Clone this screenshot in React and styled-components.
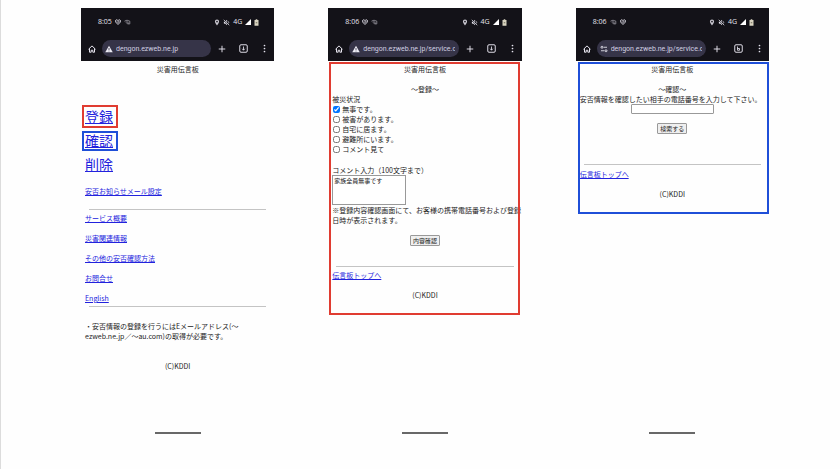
import React, { useState } from 'react';
import styled, { createGlobalStyle } from 'styled-components';

const GlobalStyle = createGlobalStyle`
  * {
    box-sizing: border-box;
  }
  body {
    margin: 0;
    background: #fefefe;
    color: #222;
    font-family: 'Noto Sans CJK JP', 'Noto Sans', sans-serif;
    font-size: 7px;
    line-height: 10px;
  }
`;

const Board = styled.main`
  min-height: 100vh;
  display: grid;
  grid-template-columns: repeat(3, minmax(0, 1fr));
  column-gap: 54px;
  padding: 8px 71px 35px 80px;
  border-left: 1px solid #dcdcdc;
`;

const Phone = styled.section`
  display: flex;
  flex-direction: column;
`;

const Chrome = styled.header`
  background: #131218;
  color: #e6e4ee;
  padding: 9px 8px 4px 7px;
`;

const StatusBar = styled.div`
  display: flex;
  align-items: center;
  gap: 3px;
  height: 10px;
  padding: 0 7px 0 10px;
  margin-bottom: 13px;
  font-family: 'Open Sans', Roboto, sans-serif;
  font-size: 7px;
`;

const StatusRight = styled.div`
  display: flex;
  align-items: center;
  gap: 3px;
  margin-left: auto;
`;

const Toolbar = styled.div`
  display: flex;
  align-items: center;
`;

const IconButton = styled.button`
  display: flex;
  border: 0;
  padding: 0;
  margin-left: ${({ $gap }) => $gap || 0}px;
  background: none;
  color: inherit;
`;

const AddressPill = styled.label`
  flex: 1;
  min-width: 0;
  display: flex;
  align-items: center;
  gap: 3px;
  height: 17px;
  margin-left: 6px;
  padding: 0 4px 0 3px;
  border-radius: 9px;
  background: #363448;
`;

const AddressInput = styled.input`
  flex: 1;
  min-width: 0;
  border: 0;
  padding: 0;
  outline: none;
  background: none;
  color: #d2d0e2;
  font-family: Roboto, 'Open Sans', sans-serif;
  font-size: 7px;
  line-height: 12px;
`;

const Page = styled.div`
  position: relative;
  padding: 3px 4px 15px;
`;

/* coloured marker line laid over the page */
const Frame = styled.div`
  position: absolute;
  top: 1px;
  bottom: 0;
  left: ${({ $left }) => $left}px;
  right: ${({ $right }) => $right}px;
  border: 2px solid ${({ $color }) => $color};
  pointer-events: none;
`;

const Title = styled.h1`
  margin: 0 0 10px;
  font-size: 7px;
  font-weight: 400;
  text-align: center;
`;

const Heading = styled.h2`
  margin: 0;
  font-size: 7px;
  font-weight: 400;
  text-align: center;
`;

const Link = styled.a`
  color: #2222dd;
  text-decoration: underline;
`;

const MainLinks = styled.nav`
  display: flex;
  flex-direction: column;
  align-items: flex-start;
  margin-top: 30px;
`;

const MainLink = styled(Link)`
  position: relative;
  font-size: 14px;
  line-height: 24px;

  &::after {
    content: '';
    display: ${({ $mark }) => ($mark ? 'block' : 'none')};
    position: absolute;
    inset: ${({ $inset }) => $inset || 0};
    border: 2px solid ${({ $mark }) => $mark};
  }
`;

const MailLink = styled(Link)`
  display: block;
  margin-top: 10px;
`;

const Rule = styled.hr`
  height: 1px;
  border: 0;
  margin: ${({ $top }) => $top}px 4px ${({ $bottom }) => $bottom || 4}px;
  background: #c4c4c4;
`;

const SubLinks = styled.nav`
  display: flex;
  flex-direction: column;
  align-items: flex-start;
  gap: 10px;
`;

const Note = styled.p`
  margin: ${({ $top }) => $top || 0}px -4px 0 0;
`;

const Copyright = styled.p`
  margin: ${({ $top }) => $top || 10}px 0 0;
  text-align: center;
`;

const Choices = styled.fieldset`
  border: 0;
  margin: 0;
  padding: 0 0 1px;
`;

const Legend = styled.legend`
  padding: 0;
`;

const Choice = styled.label`
  display: flex;
  align-items: center;
  gap: 2px;
`;

const Tick = styled.input`
  width: 7px;
  height: 7px;
  margin: 0 0 0 1px;
`;

const FieldLabel = styled.label`
  display: block;
  margin-top: 10px;
`;

const Comment = styled.textarea`
  display: block;
  width: 74px;
  height: 30px;
  padding: 0 1px;
  border: 1px solid #999;
  resize: none;
  background: #fff;
  color: #222;
  font: inherit;
  font-size: 6px;
`;

const Center = styled.div`
  display: flex;
  justify-content: center;
  margin-top: ${({ $top }) => $top || 0}px;
`;

const PhoneInput = styled.input`
  width: 83px;
  height: 10px;
  padding: 0 1px;
  border: 1px solid #999;
  border-radius: 1px;
  background: #fff;
  font: inherit;
`;

const Submit = styled.button`
  height: 11px;
  padding: 0 2px;
  border: 1px solid #999;
  border-radius: 1px;
  background: #efefef;
  color: #222;
  font: inherit;
  font-size: 6px;
  line-height: 9px;
`;

const HomeIndicator = styled.div`
  width: 46px;
  height: 2px;
  margin: auto auto 0;
  background: #686868;
`;

const RED = '#e03c31';
const BLUE = '#1f4fd8';

const HeartIcon = () => (
  <svg width="6" height="6" viewBox="0 0 12 12" fill="none" stroke="currentColor" strokeWidth="1.8">
    <path d="M6 11 1.4 6.2C0 4 1.2 1.6 3.4 1.6c1.2 0 2 .6 2.6 1.6.6-1 1.4-1.6 2.6-1.6 2.2 0 3.4 2.4 2 4.6Z" />
    <path d="M3 5.600h2l1.200 1.800 1-2.600h2" strokeWidth="1.4" />
  </svg>
);

const CastIcon = () => (
  <svg width="7" height="6" viewBox="0 0 14 12" fill="none" stroke="#8d8b94" strokeWidth="1.8">
    <path d="M1 4.400C4 2 8 2 11.600 4.400v5.400H7" />
    <path d="M3 6h6M5 8.400h5" />
  </svg>
);

const PinIcon = () => (
  <svg width="6" height="7" viewBox="0 0 12 14">
    <path d="M6 1a4.200 4.200 0 0 0-4.200 4.200C1.800 8.400 6 13 6 13s4.200-4.600 4.200-7.800A4.200 4.200 0 0 0 6 1Z" fill="#c9c7d0" />
    <circle cx="6" cy="5.200" r="1.700" fill="#131218" />
  </svg>
);

const MuteIcon = () => (
  <svg width="7" height="7" viewBox="0 0 14 14" fill="none" stroke="currentColor" strokeWidth="1.5">
    <path d="M2 5h2.500L8 2v10L4.500 9H2Z" fill="currentColor" strokeWidth="0.5" />
    <path d="M1.500 1.500 12.500 12.500" stroke="#131218" strokeWidth="3" />
    <path d="M1.500 1.500 12.500 12.500M10 4.500c1.600 1.200 1.600 3 1 4.200" />
  </svg>
);

const SignalIcon = () => (
  <svg width="6" height="6" viewBox="0 0 12 12">
    <path d="M12 0v12H0Z" fill="#fff" />
  </svg>
);

const BatteryIcon = () => (
  <svg width="5" height="7" viewBox="0 0 10 14">
    <path d="M3.400.5h3.200V2H9v11.500H1V2h2.400Z" fill="#d8d3c0" />
    <path d="M3.500 7.500h3" stroke="#55503c" strokeWidth="1.6" />
  </svg>
);

const HomeIcon = () => (
  <svg width="8" height="8" viewBox="0 0 16 16" fill="none" stroke="currentColor" strokeWidth="2">
    <path d="M1 8.500 8 1.800l7 6.700M3 7v7.400h3.400V10.500h3.200v3.900H13V7" />
  </svg>
);

const WarningIcon = () => (
  <svg width="8" height="8" viewBox="0 0 16 16">
    <path d="M8 1.500 15.500 14.500H.5Z" fill="#ecebf4" />
    <path d="M8 6v4M8 11.200v1.600" stroke="#363448" strokeWidth="1.6" />
  </svg>
);

const TuneIcon = () => (
  <svg width="8" height="8" viewBox="0 0 16 16" fill="none" stroke="#ecebf4" strokeWidth="1.7">
    <circle cx="4" cy="4.5" r="2" />
    <path d="M7.500 4.500H14M2 11.500h6.500" />
    <circle cx="12" cy="11.5" r="2" />
  </svg>
);

const PlusIcon = () => (
  <svg width="8" height="8" viewBox="0 0 16 16" stroke="currentColor" strokeWidth="1.9">
    <path d="M8 1.500v13M1.500 8h13" />
  </svg>
);

const TabsIcon = ({ count }) => (
  <svg width="9" height="9" viewBox="0 0 18 18" fill="none" stroke="currentColor" strokeWidth="1.9">
    <rect x="1.5" y="1.5" width="15" height="15" rx="2.5" />
    {count ? (
      <path d="M7 5v7.500h4V9H7" strokeWidth="1.7" />
    ) : (
      <path d="M9 5v7M6.500 9.500 9 12.500l2.500-3" strokeWidth="1.7" />
    )}
  </svg>
);

const DotsIcon = () => (
  <svg width="3" height="9" viewBox="0 0 6 18" fill="currentColor">
    <circle cx="3" cy="3" r="1.7" />
    <circle cx="3" cy="9" r="1.7" />
    <circle cx="3" cy="15" r="1.7" />
  </svg>
);

const BrowserHeader = ({ time, url, tune }) => (
  <Chrome>
    <StatusBar>
      <span>{time}</span>
      {tune ? <CastIcon /> : <HeartIcon />}
      {tune ? <HeartIcon /> : <CastIcon />}
      <StatusRight>
        <PinIcon />
        <MuteIcon />
        <span>4G</span>
        <SignalIcon />
        <BatteryIcon />
      </StatusRight>
    </StatusBar>
    <Toolbar>
      <IconButton type="button" aria-label="ホーム"><HomeIcon /></IconButton>
      <AddressPill>
        {tune ? <TuneIcon /> : <WarningIcon />}
        <AddressInput type="text" aria-label="アドレス" defaultValue={url} />
      </AddressPill>
      <IconButton type="button" aria-label="新しいタブ" $gap={7}><PlusIcon /></IconButton>
      <IconButton type="button" aria-label="タブ一覧" $gap={13}><TabsIcon count={tune} /></IconButton>
      <IconButton type="button" aria-label="メニュー" $gap={15}><DotsIcon /></IconButton>
    </Toolbar>
  </Chrome>
);

const subLinks = ['サービス概要', '災害関連情報', 'その他の安否確認方法', 'お問合せ', 'English'];

const TopScreen = () => (
  <Phone>
    <BrowserHeader time="8:05" url="dengon.ezweb.ne.jp" />
    <Page>
      <Title>災害用伝言板</Title>
      <MainLinks>
        <MainLink href="#register" $mark={RED} $inset="1px -5px 0 -3px">登録</MainLink>
        <MainLink href="#confirm" $mark={BLUE} $inset="3px -5px 1px -3px">確認</MainLink>
        <MainLink href="#delete">削除</MainLink>
      </MainLinks>
      <MailLink href="#mail">安否お知らせメール設定</MailLink>
      <Rule $top={13} $bottom={3} />
      <SubLinks>
        {subLinks.map((label) => (
          <Link key={label} href="#info">{label}</Link>
        ))}
      </SubLinks>
      <Rule $top={3} />
      <Note $top={14}>
        ・安否情報の登録を行うにはEメールアドレス(～
        <br />
        ezweb.ne.jp／～au.com)の取得が必要です。
      </Note>
      <Copyright $top={20}>(C)KDDI</Copyright>
    </Page>
    <HomeIndicator />
  </Phone>
);

const statuses = ['無事です。', '被害があります。', '自宅に居ます。', '避難所にいます。', 'コメント見て'];

const RegisterScreen = () => {
  const [checked, setChecked] = useState(['無事です。']);
  const [comment, setComment] = useState('家族全員無事です');

  const toggle = (label) => {
    setChecked(checked.includes(label) ? checked.filter((c) => c !== label) : [...checked, label]);
  };

  return (
    <Phone>
      <BrowserHeader time="8:06" url="dengon.ezweb.ne.jp/service.c" />
      <Page>
        <Title>災害用伝言板</Title>
        <Heading>～登録～</Heading>
        <Choices>
          <Legend>被災状況</Legend>
          {statuses.map((label) => (
            <Choice key={label}>
              <Tick type="checkbox" checked={checked.includes(label)} onChange={() => toggle(label)} />
              {label}
            </Choice>
          ))}
        </Choices>
        <FieldLabel htmlFor="comment">コメント入力（100文字まで）</FieldLabel>
        <Comment id="comment" value={comment} onChange={(e) => setComment(e.target.value)} />
        <Note>※登録内容確認画面にて、お客様の携帯電話番号および登録日時が表示されます。</Note>
        <Center $top={10}>
          <Submit type="button">内容確認</Submit>
        </Center>
        <Rule $top={20} $bottom={3} />
        <Link href="#top">伝言板トップへ</Link>
        <Copyright>(C)KDDI</Copyright>
        <Frame $color={RED} $left={1} $right={2} />
      </Page>
      <HomeIndicator />
    </Phone>
  );
};

const ConfirmScreen = () => {
  const [phone, setPhone] = useState('');

  return (
    <Phone>
      <BrowserHeader time="8:06" url="dengon.ezweb.ne.jp/service.c" tune />
      <Page>
        <Title>災害用伝言板</Title>
        <Heading>～確認～</Heading>
        <label htmlFor="phone">安否情報を確認したい相手の電話番号を入力して下さい。</label>
        <Center>
          <PhoneInput id="phone" type="tel" value={phone} onChange={(e) => setPhone(e.target.value)} />
        </Center>
        <Center $top={9}>
          <Submit type="button">検索する</Submit>
        </Center>
        <Rule $top={30} />
        <Link href="#top">伝言板トップへ</Link>
        <Copyright>(C)KDDI</Copyright>
        <Frame $color={BLUE} $left={2} $right={0} />
      </Page>
      <HomeIndicator />
    </Phone>
  );
};

const App = () => (
  <>
    <GlobalStyle />
    <Board>
      <TopScreen />
      <RegisterScreen />
      <ConfirmScreen />
    </Board>
  </>
);

export default App;
